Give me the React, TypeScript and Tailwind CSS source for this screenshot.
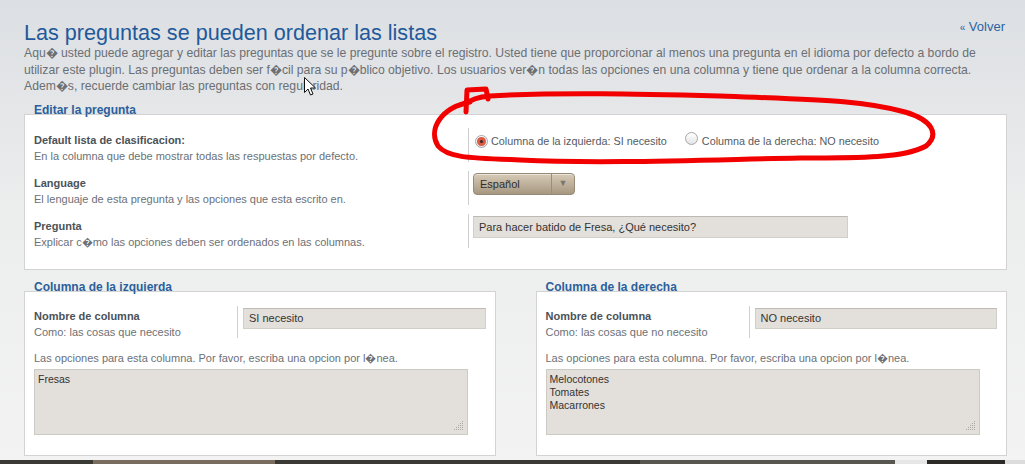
import React from 'react';

const descLines = [
  'Aqu\uFFFD usted puede agregar y editar las preguntas que se le pregunte sobre el registro. Usted tiene que proporcionar al menos una pregunta en el idioma por defecto a bordo de',
  'utilizar este plugin. Las preguntas deben ser f\uFFFDcil para su p\uFFFDblico objetivo. Los usuarios ver\uFFFDn todas las opciones en una columna y tiene que ordenar a la columna correcta.',
  'Adem\uFFFDs, recuerde cambiar las preguntas con regularidad.',
];

function Radio({ checked }: { checked?: boolean }) {
  return (
    <span className="inline-flex h-[13px] w-[13px] items-center justify-center rounded-full border border-[#a7a7a7] bg-gradient-to-b from-white to-[#e4e4e4]">
      {checked && (
        <span className="flex h-[9px] w-[9px] items-center justify-center rounded-full bg-[#dc5a42]">
          <span className="h-[3px] w-[3px] rounded-full bg-[#2a2a2a]" />
        </span>
      )}
    </span>
  );
}

function Legend({ children }: { children: React.ReactNode }) {
  return (
    <h3 className="relative z-10 h-[10px] pl-[10px] text-[12px] font-bold leading-[12px] text-[#2b5f9c]">{children}</h3>
  );
}

function Row({ label, desc, children }: { label: string; desc: string; children: React.ReactNode }) {
  return (
    <div className="flex h-[34px]">
      <div className="w-[434px] pt-[4px] text-[11px] leading-[16px]">
        <div className="font-bold text-[#4b5258]">{label}</div>
        <div className="text-[#6c7177]">{desc}</div>
      </div>
      <div className="flex-1 border-l border-[#cfcfcf] pl-[4px] pt-[2px]">{children}</div>
    </div>
  );
}

function Grip() {
  return (
    <svg className="absolute bottom-[3px] right-[3px]" width="10" height="10" viewBox="0 0 10 10">
      {[[8, 0], [6, 2], [8, 2], [4, 4], [6, 4], [8, 4], [2, 6], [4, 6], [6, 6], [8, 6], [0, 8], [2, 8], [4, 8], [6, 8], [8, 8]].map(([x, y], i) => (
        <rect key={i} x={x} y={y} width="1" height="1" fill="#a9a59f" />
      ))}
    </svg>
  );
}

function ColumnBox({ title, name, hint, items }: { title: string; name: string; hint: string; items: string[] }) {
  return (
    <div>
      <Legend>{title}</Legend>
      <div className="h-[165px] border border-[#d3d3d3] bg-white pl-[9px] pr-[9px] pt-[14px]">
        <div className="flex h-[32px]">
          <div className="w-[203px] pt-[2px] text-[11px] leading-[16px]">
            <div className="font-bold text-[#4b5258]">Nombre de columna</div>
            <div className="text-[#6c7177]">{hint}</div>
          </div>
          <div className="flex-1 border-l border-[#cfcfcf] pl-[5px] pt-[2px]">
            <div className="flex h-[21px] items-center border border-[#d2cec8] border-t-[#bfbab3] bg-[#e3dfda] pl-[5px] text-[11px] text-[#333]">
              {name}
            </div>
          </div>
        </div>
        <div className="mt-[12px] text-[11px] leading-[16px] text-[#6c7177]">
          Las opciones para esta columna. Por favor, escriba una opcion por l{'\uFFFD'}nea.
        </div>
        <div className="relative mt-[3px] h-[66px] w-[434px] border border-[#cdc9c3] bg-[#e3dfda] px-[3px] pt-[3px] text-[10.5px] leading-[13px] text-[#333]">
          {items.map(t => (
            <div key={t}>{t}</div>
          ))}
          <Grip />
        </div>
      </div>
    </div>
  );
}

export default function App() {
  return (
    <div className="relative h-[464px] w-[1025px] overflow-hidden font-['Liberation_Sans',Arial,sans-serif]">
      <div className="h-[460px] bg-gradient-to-b from-[#dcdfe3] via-[#eceded] via-45% to-[#f3f3f3] pl-6 pr-[18px]">
        <div className="flex items-start justify-between pt-[20px]">
          <h1 className="text-[21.6px] leading-[25px] text-[#22599a]">Las preguntas se pueden ordenar las listas</h1>
          <a className="mr-[2px] mt-[-1px] text-[13px] leading-[16px] text-[#2d62a0]">
            <span className="text-[10px]">«</span> Volver
          </a>
        </div>
        <p className="whitespace-nowrap text-[12.2px] leading-[16.5px] text-[#6b6f74]">
          {descLines.map((l, i) => (
            <span key={i} className="block">{l}</span>
          ))}
        </p>

        <div className="mt-[9.5px]">
          <Legend>Editar la pregunta</Legend>
          <div className="h-[156px] border border-[#d3d3d3] bg-white pl-[9px] pt-[13px]">
            <div className="flex flex-col gap-[9px]">
              <Row label="Default lista de clasificacion:" desc="En la columna que debe mostrar todas las respuestas por defecto.">
                <div className="flex h-[22px] items-center pl-[2px] text-[10.8px] text-[#555b61]">
                  <Radio checked />
                  <span className="ml-[3px]">Columna de la izquierda: SI necesito</span>
                  <span className="ml-[18px]"><Radio /></span>
                  <span className="ml-[4px]">Columna de la derecha: NO necesito</span>
                </div>
              </Row>
              <Row label="Language" desc="El lenguaje de esta pregunta y las opciones que esta escrito en.">
                <div className="flex h-[22px] w-[102px] items-center rounded-[4px] border border-[#978a75] bg-gradient-to-b from-[#d6cbb8] to-[#a79880] text-[11px] text-[#2f2f2f] shadow-[inset_0_1px_0_rgba(255,255,255,0.5)]">
                  <span className="flex-1 pl-[6px]">Español</span>
                  <span className="flex h-full w-[23px] items-center justify-center border-l border-[#9c8f7a] text-[9px] text-[#7b766e]">▼</span>
                </div>
              </Row>
              <Row label="Pregunta" desc={'Explicar c\uFFFDmo las opciones deben ser ordenados en las columnas.'}>
                <div className="flex h-[22px] w-[375px] items-center border border-[#d2cec8] border-t-[#bdb8b1] bg-[#e3dfda] pl-[5px] text-[11px] text-[#333]">
                  Para hacer batido de Fresa, ¿Qué necesito?
                </div>
              </Row>
            </div>
          </div>
        </div>

        <div className="mt-[11px] grid grid-cols-2 gap-[40px]">
          <ColumnBox title="Columna de la izquierda" name="SI necesito" hint="Como: las cosas que necesito" items={['Fresas']} />
          <ColumnBox title="Columna de la derecha" name="NO necesito" hint="Como: las cosas que no necesito" items={['Melocotones', 'Tomates', 'Macarrones']} />
        </div>
      </div>

      <div className="flex h-[4px] bg-[#3a3934]">
        <div className="w-[93px]" />
        <div className="w-[182px] bg-[#776c5d]" />
        <div className="w-[365px]" />
        <div className="w-[255px] bg-[#58574f]" />
        <div className="w-[32px] bg-[#e6e6e6]" />
        <div className="w-[78px] bg-[#2b2a27]" />
        <div className="flex-1 bg-[#dcdcdc]" />
      </div>

      {/* red hand drawn marker around the radio options */}
      <svg className="pointer-events-none absolute left-0 top-0" width="1025" height="464">
        <path
          d="M466 112 L467 90 L486 89 L488 99 M470 102 C440 108 428 130 438 146 C448 158 470 158 520 160 C600 164 700 160 800 158 C860 158 905 158 926 146 C940 134 932 120 905 112 C860 100 820 100 720 96 C640 94 560 92 490 96 C478 97 470 100 466 104"
          fill="none"
          stroke="#f20000"
          strokeWidth="5"
          strokeLinecap="round"
          strokeLinejoin="round"
        />
      </svg>

      {/* mouse pointer */}
      <svg className="pointer-events-none absolute left-[304px] top-[77px]" width="13" height="20" viewBox="0 0 13 20">
        <path d="M0.5 0.5 L0.5 15.5 L4 12 L6.5 18 L9 17 L6.5 11 L11.5 11 Z" fill="#fff" stroke="#111" strokeWidth="1" strokeLinejoin="round" />
      </svg>
    </div>
  );
}
